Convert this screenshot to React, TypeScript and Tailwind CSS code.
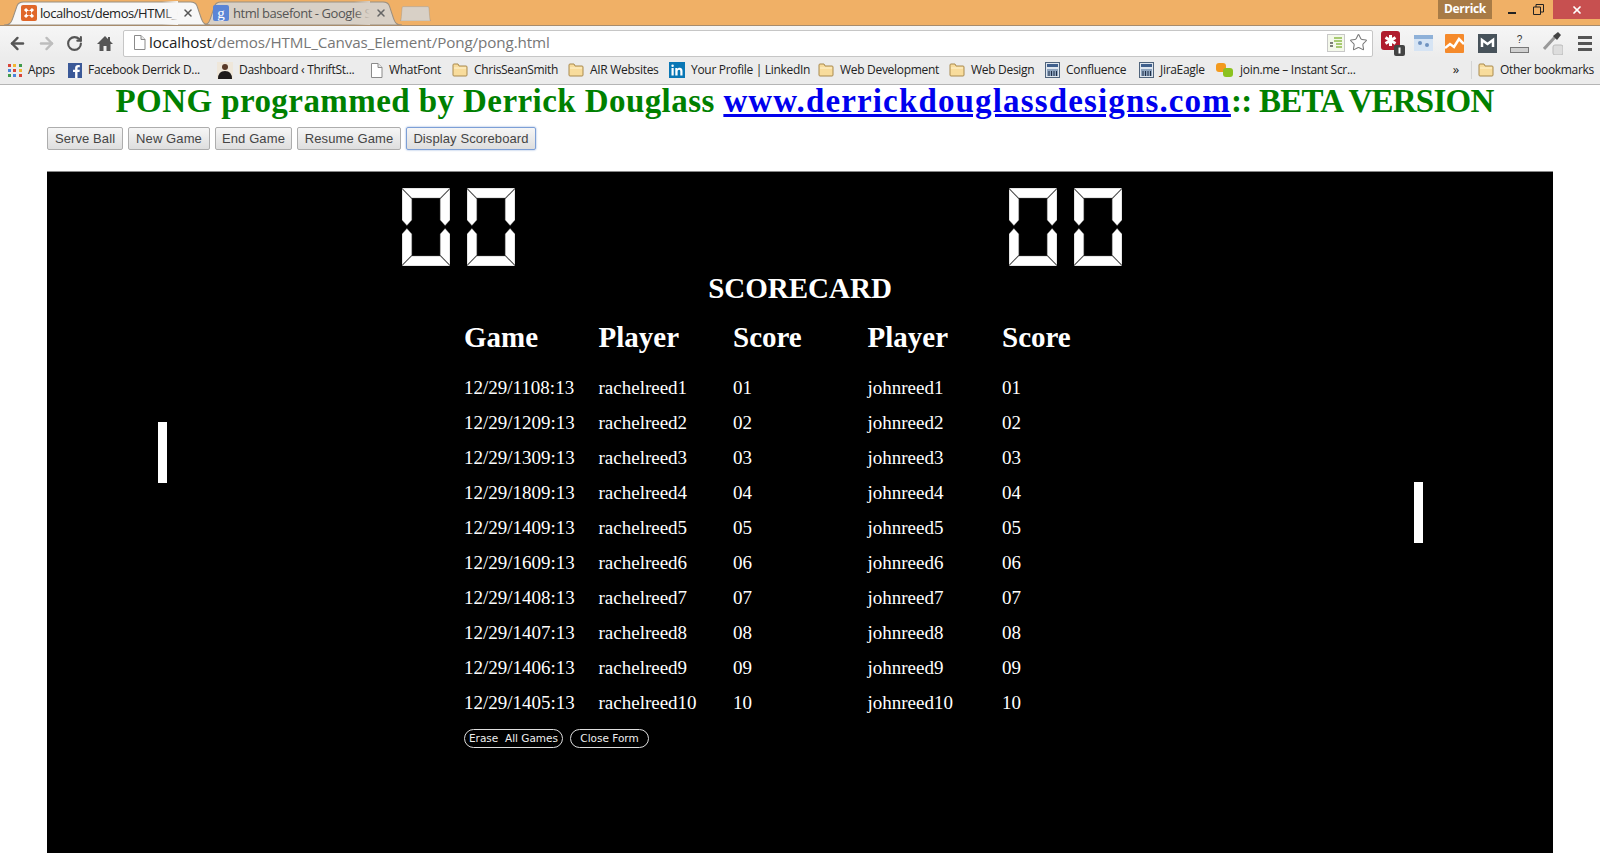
import React from 'react';
import { ArrowLeft, ArrowRight, RotateCw, Star, X } from 'lucide-react';

const games = [
  ['12/29/1108:13', 'rachelreed1', '01', 'johnreed1', '01'],
  ['12/29/1209:13', 'rachelreed2', '02', 'johnreed2', '02'],
  ['12/29/1309:13', 'rachelreed3', '03', 'johnreed3', '03'],
  ['12/29/1809:13', 'rachelreed4', '04', 'johnreed4', '04'],
  ['12/29/1409:13', 'rachelreed5', '05', 'johnreed5', '05'],
  ['12/29/1609:13', 'rachelreed6', '06', 'johnreed6', '06'],
  ['12/29/1408:13', 'rachelreed7', '07', 'johnreed7', '07'],
  ['12/29/1407:13', 'rachelreed8', '08', 'johnreed8', '08'],
  ['12/29/1406:13', 'rachelreed9', '09', 'johnreed9', '09'],
  ['12/29/1405:13', 'rachelreed10', '10', 'johnreed10', '10'],
];

// Favicons and toolbar drawings
const Folder = () => (
  <svg width="16" height="14" viewBox="0 0 16 14" className="shrink-0">
    <path d="M1 3V2q0-1 1-1h4l1 2h7q1 0 1 1v8q0 1-1 1H2q-1 0-1-1z" fill="#f8dc9c" stroke="#a98a4e" />
    <path d="M2 5h12" stroke="#fff3d0" />
  </svg>
);

const PageIcon = () => (
  <svg width="13" height="15" viewBox="0 0 13 15" className="shrink-0">
    <path d="M1.500 .5h6.500l4 4v10H1.500z" fill="#fff" stroke="#8a8a8a" />
    <path d="M8 .5v4h4" fill="#e8e8e8" stroke="#8a8a8a" />
  </svg>
);

const AppsIcon = () => {
  const colors = ['#d9453a', '#f2b632', '#3f9b4b', '#4a84dc', '#d9453a', '#f2b632', '#3f9b4b', '#4a84dc', '#d9453a'];
  return (
    <div className="grid grid-cols-3 gap-[2px] w-[14px] shrink-0">
      {colors.map((c, i) => (
        <span key={i} className="w-[3px] h-[3px]" style={{ background: c }} />
      ))}
    </div>
  );
};

const FacebookIcon = () => (
  <svg width="14" height="15" viewBox="0 0 14 15" className="shrink-0">
    <rect width="14" height="15" fill="#3b5998" />
    <path d="M9.500 15V9h2l.3-2.300H9.500V5.300c0-.7.3-1.100 1.100-1.100h1.200V2.100C11.500 2 10.800 2 10.100 2 8.300 2 7.100 3.100 7.100 5v1.700H5V9h2.100v6z" fill="#fff" />
  </svg>
);

const AvatarIcon = () => (
  <svg width="16" height="17" viewBox="0 0 16 17" className="shrink-0">
    <rect width="16" height="17" fill="#efe7da" />
    <circle cx="8" cy="5" r="3" fill="#5a3a28" />
    <path d="M1 17q0-8 7-8t7 8z" fill="#1d1a1a" />
  </svg>
);

const LinkedInIcon = () => (
  <svg width="16" height="16" viewBox="0 0 16 16" className="shrink-0">
    <rect width="16" height="16" fill="#0a77b5" />
    <path d="M2.500 6h2.200v7.500H2.500zM3.600 2.500a1.250 1.250 0 1 1 0 2.500 1.250 1.250 0 0 1 0-2.500zM6.300 6h2.100v1c.4-.7 1.200-1.200 2.300-1.200 2.100 0 2.800 1.300 2.800 3.300v4.400h-2.200V9.600c0-.9-.2-1.800-1.200-1.800s-1.500.8-1.500 1.800v3.900H6.300z" fill="#fff" />
  </svg>
);

const JiraIcon = () => (
  <svg width="15" height="16" viewBox="0 0 15 16" className="shrink-0">
    <rect x=".5" y=".5" width="14" height="15" fill="#dfe6ee" stroke="#50647c" />
    <rect x="2" y="2" width="11" height="3" fill="#3f5f8c" />
    <path d="M2 7h11v7H2z" fill="#8fa5bf" />
    <path d="M4 9v5M6.500 9v5M9 9v5M11.500 9v5" stroke="#1f2f48" />
  </svg>
);

const JoinMeIcon = () => (
  <svg width="18" height="15" viewBox="0 0 18 15" className="shrink-0">
    <rect x="0" y="0" width="10" height="9" rx="3" fill="#f39a1e" />
    <rect x="7" y="5" width="10" height="9" rx="3" fill="#8cc21f" />
  </svg>
);

const Bookmark = ({ icon, label, w }: { icon: React.ReactNode; label: string; w: string }) => (
  <div className="flex items-center gap-[6px] shrink-0">
    {icon}
    <span className={`${w} whitespace-nowrap`}>{label}</span>
  </div>
);

const TabShape = ({ fill }: { fill: string }) => (
  <svg className="absolute inset-0 w-full h-full" viewBox="0 0 190 25" preserveAspectRatio="none">
    <path d="M0 25C6 25 7 22 9 15L12 5C13 2 15 1 18 1H172C175 1 177 2 178 5L181 15C183 22 184 25 190 25z" fill={fill} stroke="#9a8f80" strokeWidth="1" />
  </svg>
);

// Seven-segment digit drawn as on the canvas (always a zero here)
const ZeroDigit = () => (
  <svg width="48" height="78" viewBox="0 0 49 78" preserveAspectRatio="none" className="shrink-0">
    <g fill="#fff" stroke="#777" strokeWidth="0.4">
      <path d="M0 0H49L39 10H10z" />
      <path d="M0 78H49L39 68H10z" />
      <path d="M0 1L10 11V32L5 37.500L0 32z" />
      <path d="M49 1L39 11V32L44 37.500L49 32z" />
      <path d="M0 77L10 67V46L5 40.500L0 46z" />
      <path d="M49 77L39 67V46L44 40.500L49 46z" />
    </g>
  </svg>
);

const Score = () => (
  <div className="flex gap-[17px]">
    <ZeroDigit />
    <ZeroDigit />
  </div>
);

const PageButton = ({ label, w, focused }: { label: string; w: string; focused?: boolean }) => (
  <button
    className={`${w} h-[23px] rounded-[2px] text-[13px] tracking-[0.1px] text-[#444] bg-gradient-to-b from-[#f6f6f6] to-[#dedede] border ${focused ? 'border-[#7d9fd6] shadow-[0_0_2px_#7d9fd6]' : 'border-[#adadad]'}`}
  >
    {label}
  </button>
);

const App: React.FC = () => {
  return (
    <div className="w-[1600px] h-[860px] overflow-hidden bg-white flex flex-col font-['Liberation_Sans',sans-serif]">
      {/* Tab strip */}
      <div className="h-[25px] shrink-0 bg-[#f0b066] flex items-end pl-[4px] relative">
        <div className="relative w-[206px] h-[24px] z-10 flex items-center pl-[17px] gap-[3px]">
          <TabShape fill="#f7f7f7" />
          <svg width="16" height="16" viewBox="0 0 16 16" className="relative shrink-0">
            <rect width="16" height="16" rx="2" fill="#e0672a" />
            <path d="M4 4l8 8M12 4l-8 8" stroke="#fff" strokeWidth="3" />
            <rect x="6" y="6" width="4" height="4" fill="#e0672a" />
          </svg>
          <div className="relative w-[138px] overflow-hidden whitespace-nowrap">
            <span className="text-[13px] text-[#222] font-['Open_Sans',sans-serif] tracking-[-0.45px]">localhost/demos/HTML_C</span>
            <span className="absolute right-0 top-0 bottom-0 w-[16px] bg-gradient-to-r from-transparent to-[#f7f7f7]" />
          </div>
          <X size={12} strokeWidth={3} className="relative shrink-0 ml-[1px] text-[#555]" />
        </div>
        <div className="relative w-[200px] h-[24px] -ml-[8px] flex items-center pl-[11px] gap-[4px]">
          <TabShape fill="#d8d0c6" />
          <div className="relative w-[16px] h-[16px] shrink-0 rounded-[2px] bg-[#5b85d6] text-white text-[15px] leading-[16px] text-center font-['Liberation_Serif',serif]">g</div>
          <div className="relative w-[137px] overflow-hidden whitespace-nowrap">
            <span className="text-[13px] text-[#555] font-['Open_Sans',sans-serif] tracking-[-0.45px]">html basefont - Google Se</span>
            <span className="absolute right-0 top-0 bottom-0 w-[16px] bg-gradient-to-r from-transparent to-[#d8d0c6]" />
          </div>
          <X size={12} strokeWidth={3} className="relative shrink-0 ml-[1px] text-[#666]" />
        </div>
        <div className="relative w-[31px] h-[15px] -ml-[2px] mb-[4px]">
          <TabShape fill="#d8d0c6" />
        </div>
        {/* Window controls */}
        <div className="ml-auto self-start flex items-start h-[19px]">
          <div className="w-[54px] h-[19px] bg-[#a87b46] text-white text-[12px] font-bold leading-[18px] text-center font-['Open_Sans',sans-serif] tracking-[-0.3px]">Derrick</div>
          <div className="w-[61px] flex items-center h-[19px] pl-[16px] gap-[17px]">
            <span className="w-[8px] h-[2px] bg-[#222] mt-[6px]" />
            <svg width="11" height="11" viewBox="0 0 11 11">
              <path d="M.5 3h7v7.500h-7zM3 3V.5h7.500V8H8" fill="none" stroke="#222" />
            </svg>
          </div>
          <div className="w-[47px] h-[19px] bg-[#c75050] flex items-center justify-center">
            <X size={12} strokeWidth={3.500} className="text-white" />
          </div>
        </div>
      </div>

      {/* Toolbar */}
      <div className="h-[33px] shrink-0 pt-[2px] bg-gradient-to-b from-[#f6f6f6] to-[#ececec] border-t border-[#a88c6c] flex items-center pl-[8px] pr-[6px]">
        <ArrowLeft size={19} strokeWidth={3} className="text-[#555] shrink-0" />
        <ArrowRight size={19} strokeWidth={3} className="text-[#bdbdbd] shrink-0 ml-[10px]" />
        <RotateCw size={17} strokeWidth={3} className="text-[#555] shrink-0 ml-[10px]" />
        <svg width="16" height="15" viewBox="0 0 16 15" className="shrink-0 ml-[14px]">
          <path d="M8 0L0 8h2.500v7H6.500v-5h3v5h4V8H16L13 5V1h-2v2z" fill="#555" />
        </svg>
        <div className="ml-[10px] w-[1250px] h-[27px] pb-[1px] bg-white border border-[#c6c6c6] rounded-[2px] flex items-center pl-[9px] pr-[4px]">
          <PageIcon />
          <span className="ml-[3px] text-[15.200px] font-['Open_Sans',sans-serif] tracking-[-0.1px] text-[#222]">localhost</span>
          <span className="text-[15.200px] font-['Open_Sans',sans-serif] tracking-[-0.1px] text-[#777]">/demos/HTML_Canvas_Element/Pong/pong.html</span>
          <div className="ml-auto flex items-center gap-[4px]">
            <svg width="18" height="18" viewBox="0 0 18 18">
              <rect x=".5" y=".5" width="17" height="17" fill="#f4f8ea" stroke="#c8c8c8" />
              <path d="M7 4h8M7 7h8M9 10h6M9 13h6" stroke="#8dbb4a" strokeWidth="1.500" />
              <path d="M3 9h3M3 12h3" stroke="#555" strokeWidth="1.500" />
            </svg>
            <Star size={19} strokeWidth={1.300} className="text-[#777]" />
          </div>
        </div>
        <div className="flex items-center ml-[8px] gap-[12px] shrink-0">
          <svg width="24" height="25" viewBox="0 0 24 25">
            <rect x="0" y="0" width="19" height="19" rx="3" fill="#b01c2e" />
            <path d="M9.500 4v11M4.500 6.500l10 6M14.500 6.500l-10 6" stroke="#fff" strokeWidth="3" />
            <rect x="13" y="14" width="11" height="11" rx="2" fill="#444" />
            <path d="M18.500 16.500v6" stroke="#fff" strokeWidth="2" />
          </svg>
          <svg width="19" height="16" viewBox="0 0 19 16" className="-ml-[3px]">
            <rect width="19" height="16" fill="#d6e4f4" />
            <rect width="19" height="4" fill="#8fb1d8" />
            <circle cx="6" cy="8" r="2" fill="#6f93c0" />
            <circle cx="13" cy="10" r="2" fill="#6f93c0" />
          </svg>
          <svg width="19" height="19" viewBox="0 0 19 19">
            <rect width="19" height="19" rx="1" fill="#f58a2b" />
            <path d="M0 14l5-4 4 3 5-8 5 5" stroke="#fff" strokeWidth="2.500" fill="none" />
          </svg>
          <svg width="19" height="19" viewBox="0 0 19 19" className="ml-[2px]">
            <rect width="19" height="19" fill="#47525a" />
            <path d="M4 13V6l5.500 4L15 6v7" stroke="#fff" strokeWidth="2.500" fill="none" />
          </svg>
          <svg width="19" height="19" viewBox="0 0 19 19" className="ml-[1px]">
            <rect x=".5" y="13.500" width="18" height="5" fill="#d0d0d0" stroke="#777" />
            <text x="9.500" y="9" fontSize="10" textAnchor="middle" fill="#333" fontFamily="Liberation Sans">?</text>
          </svg>
          <svg width="20" height="24" viewBox="0 0 20 24" className="ml-[2px]">
            <path d="M1 18L12 6" stroke="#999" strokeWidth="3" />
            <path d="M10 5l5-4 3 3-4 5z" fill="#444" />
            <rect x="10" y="14" width="10" height="10" rx="2" fill="#ddd" stroke="#bbb" />
          </svg>
          <div className="flex flex-col gap-[3px] ml-[3px]">
            <span className="w-[14px] h-[3px] bg-[#555]" />
            <span className="w-[14px] h-[3px] bg-[#555]" />
            <span className="w-[14px] h-[3px] bg-[#555]" />
          </div>
        </div>
      </div>

      {/* Bookmarks bar */}
      <div className="h-[27px] shrink-0 pb-[2px] bg-[#ececec] border-b border-[#b5b5b5] flex items-center pl-[8px] pr-[8px] gap-[12px] text-[12px] text-[#222] font-['Open_Sans',sans-serif] tracking-[-0.3px]">
        <Bookmark icon={<AppsIcon />} label="Apps" w="w-[28px]" />
        <Bookmark icon={<FacebookIcon />} label="Facebook Derrick D..." w="w-[117px]" />
        <Bookmark icon={<AvatarIcon />} label="Dashboard ‹ ThriftSt..." w="w-[119px]" />
        <Bookmark icon={<PageIcon />} label="WhatFont" w="w-[51px]" />
        <Bookmark icon={<Folder />} label="ChrisSeanSmith" w="w-[82px]" />
        <Bookmark icon={<Folder />} label="AIR Websites" w="w-[67px]" />
        <Bookmark icon={<LinkedInIcon />} label="Your Profile | LinkedIn" w="w-[115px]" />
        <Bookmark icon={<Folder />} label="Web Development" w="w-[97px]" />
        <Bookmark icon={<Folder />} label="Web Design" w="w-[62px]" />
        <Bookmark icon={<JiraIcon />} label="Confluence" w="w-[61px]" />
        <Bookmark icon={<JiraIcon />} label="JiraEagle" w="w-[44px]" />
        <Bookmark icon={<JoinMeIcon />} label="join.me – Instant Scr..." w="w-[116px]" />
        <div className="ml-auto flex items-center">
          <span className="text-[13px] mr-[12px]">»</span>
          <span className="w-px h-[18px] bg-[#d4d4d4] mr-[6px]" />
          <Bookmark icon={<Folder />} label="Other bookmarks" w="w-[92px]" />
        </div>
      </div>

      {/* Page */}
      <div className="flex-1 min-h-0 flex flex-col px-[47px]">
        <h1 className="h-[32px] pl-[9px] whitespace-nowrap text-center text-[33px] leading-[32px] font-bold text-[#008000] font-['Liberation_Serif',serif]">
          <span className="tracking-[0.43px]">PONG programmed by Derrick Douglass </span>
          <a href="#" className="text-[#0000ee] underline tracking-[1.15px]">www.derrickdouglassdesigns.com</a>
          <span className="tracking-[-0.75px]">:: BETA VERSION</span>
        </h1>
        <div className="mt-[10px] flex gap-[5px]">
          <PageButton label="Serve Ball" w="w-[76px]" />
          <PageButton label="New Game" w="w-[82px]" />
          <PageButton label="End Game" w="w-[77px]" />
          <PageButton label="Resume Game" w="w-[104px]" />
          <PageButton label="Display Scoreboard" w="w-[130px]" focused />
        </div>

        {/* Canvas */}
        <div className="relative mt-[21px] w-[1506px] h-[682px] bg-black text-white font-['Liberation_Serif',serif] border-t border-[#888]">
          <div className="absolute left-[111px] top-[250px] w-[9px] h-[61px] bg-white" />
          <div className="absolute left-[1367px] top-[310px] w-[9px] h-[61px] bg-white" />

          <div className="flex pt-[16px] pl-[355px] gap-[494px]">
            <Score />
            <Score />
          </div>

          <div className="mt-[6px] text-center text-[29px] leading-[32px] font-bold">SCORECARD</div>

          <div className="pl-[417px] mt-[12px]">
            <div className="grid grid-cols-[134.500px_134.500px_134.500px_134.500px_134.500px] h-[34px] items-center text-[29px] font-bold">
              <span>Game</span>
              <span>Player</span>
              <span>Score</span>
              <span>Player</span>
              <span>Score</span>
            </div>
            <div className="mt-[21px] flex flex-col">
              {games.map(row => (
                <div key={row[0]} className="grid grid-cols-[134.500px_134.500px_134.500px_134.500px_134.500px] h-[35px] items-center text-[19px]">
                  {row.map((cell, i) => (
                    <span key={i} className="whitespace-nowrap">{cell}</span>
                  ))}
                </div>
              ))}
            </div>
            <div className="mt-[8px] flex gap-[7px] text-[10.500px] text-[#eee] font-['DejaVu_Sans',sans-serif]">
              <button className="w-[99px] h-[19px] rounded-full border border-[#ddd] whitespace-pre">Erase  All Games</button>
              <button className="w-[79px] h-[19px] rounded-full border border-[#ddd]">Close Form</button>
            </div>
          </div>
        </div>
      </div>
    </div>
  );
};

export default App;
